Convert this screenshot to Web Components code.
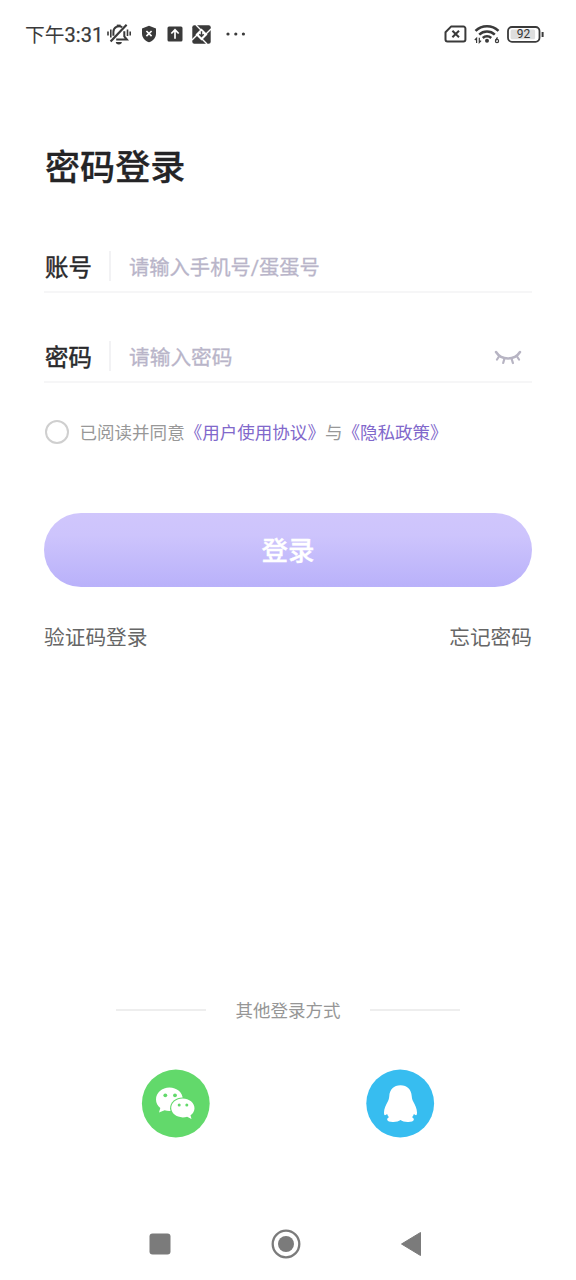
<!DOCTYPE html>
<html lang="zh-CN">
<head>
<meta charset="utf-8">
<title>密码登录</title>
<style>
html,body{margin:0;padding:0;background:#fff}
body{width:576px;height:1280px;overflow:hidden;font-family:Roboto,"Noto Sans CJK SC",sans-serif;color:#29292b}
</style>
</head>
<body>
<login-screen></login-screen>
<script>
const define = (name, html) => {
  const t = document.createElement('template');
  t.innerHTML = html;
  customElements.define(name, class extends HTMLElement {
    constructor() {
      super();
      this.attachShadow({ mode: 'open' }).appendChild(t.content.cloneNode(true));
    }
  });
};

define('status-bar', `
<style>
:host{display:flex;height:68px;box-sizing:border-box;padding:0 32px 0 25px;align-items:center;color:#3a3a3a}
.time{font-size:19.8px;line-height:24px;width:82px;white-space:nowrap;margin-top:3px}
.time b{font-weight:400;font-size:20px;-webkit-text-stroke:.25px}
svg{display:block;flex:none}
.sp{flex:1}
.bat{position:relative;display:flex;width:37px;height:17px}
.bat span{position:absolute;left:0;top:0;width:33px;line-height:17px;text-align:center;font-size:12px;color:#333}
</style>
<div class="time">下午<b>3:31</b></div>
<svg width="24" height="22" viewBox="0 0 24 22" fill="none" stroke="#3a3a3a" stroke-width="2">
<path d="M3.600 18.600 19.600 1.800" stroke-width="2.200"/><path d="M6.400 12.800V9a5.600 5.600 0 0 1 8.800-4.700M17.300 8.200v5.200l2.600 3.200H9.200"/><path d="M9.800 2.600h3.800"/><path d="M8.800 19h6a3 2.400 0 0 1-6 0z" fill="#3a3a3a" stroke="none"/>
<path d="M3.800 6.400v8.200M20.500 6.400v6.500M1 8.600v4M23.200 8.600v4" stroke-width="1.600"/></svg>
<svg style="margin-left:10px" width="16" height="18" viewBox="0 0 16 18"><path d="M8 .8 15 3.400v5c0 4.200-3 7.300-7 8.900-4-1.600-7-4.700-7-8.900v-5z" fill="#3a3a3a"/><path d="m5.400 6 5.200 5.200m0-5.200-5.200 5.200" stroke="#fff" stroke-width="1.700"/></svg>
<svg style="margin-left:10px" width="16" height="16" viewBox="0 0 16 16"><rect x=".5" y=".5" width="15" height="15" rx="1.500" fill="#3a3a3a"/><path d="M8 12.800V4M4.300 7.500 8 3.800l3.700 3.700" fill="none" stroke="#fff" stroke-width="1.700"/></svg>
<svg style="margin-left:9px" width="19" height="19" viewBox="0 0 19 19"><rect x=".3" y=".3" width="18.400" height="18.400" rx="2" fill="#3a3a3a"/><path d="M9.500 3.500 15.500 9.500 9.500 15.500 3.500 9.500z" fill="#fff"/><path d="M4 0 12 8M19 4 11 12M15 19 7 11M0 15 8 7" stroke="#fff" stroke-width="1.400"/><path d="M9.500 6.200v5M7.300 9.300 9.500 11.600l2.200-2.300" fill="none" stroke="#3a3a3a" stroke-width="1.400"/></svg>
<svg style="margin-left:15px" width="20" height="4" viewBox="0 0 20 4" fill="#3a3a3a"><circle cx="2" cy="2" r="1.600"/><circle cx="9.800" cy="2" r="1.600"/><circle cx="17.400" cy="2" r="1.600"/></svg>
<div class="sp"></div>
<svg style="margin-right:7px" width="23" height="18" viewBox="0 0 23 18" fill="none" stroke="#3a3a3a" stroke-width="2"><path d="M7 1.600h12.400a2 2 0 0 1 2 2v10.800a2 2 0 0 1-2 2H3.500a2 2 0 0 1-2-2V7.200z" stroke-linejoin="round"/><path d="m8.400 5.700 6.600 6.600m0-6.600-6.600 6.600"/></svg>
<svg style="margin-right:7px" width="26" height="20" viewBox="0 0 26 20" fill="none" stroke="#3a3a3a" stroke-width="2.500"><path d="M1.500 6.900a16.500 16.500 0 0 1 23 0M5.200 10.600a11.300 11.300 0 0 1 15.600 0M8.800 14a6.100 6.100 0 0 1 8.400 0"/><circle cx="13" cy="16.800" r="2" fill="#3a3a3a" stroke="none"/><path d="M2.600 19v-4.800L.8 16M5.300 13.700v4.800l1.800-1.800" stroke-width="1.200"/><path d="M23.500 13.300 21.700 16.300" stroke-width="1.300"/><circle cx="23" cy="17" r="1.600" stroke-width="1.200"/></svg>
<div class="bat"><svg width="37" height="17" viewBox="0 0 37 17"><rect x="1" y="1" width="31.500" height="14.800" rx="4" fill="#fff" stroke="#3a3a3a" stroke-width="1.800"/><rect x="3.600" y="3.500" width="24.500" height="9.800" rx="1.500" fill="#dedede"/><path d="M35.600 6v5" stroke="#3a3a3a" stroke-width="2"/></svg><span>92</span></div>
`);

define('input-row', `
<style>
:host{display:flex;height:61px;box-sizing:border-box;border-bottom:2px solid #f6f6f7;align-items:center;padding:9px 10px 0 1px}
.label{font-size:23.400px;line-height:30px;width:64px;margin-top:4px;-webkit-text-stroke:.5px #29292b}
.bar{width:2px;height:30px;background:#f2f2f4;margin-right:18px}
.hint{font-size:var(--hint-size,20.700px);line-height:30px;margin-top:3px;color:#b9b5c9;-webkit-text-stroke:.3px #b9b5c9;white-space:nowrap;flex:1}
</style>
<div class="label"><slot name="label"></slot></div><div class="bar"></div><div class="hint"><slot></slot></div><slot name="icon"></slot>
`);

define('closed-eye', `
<style>:host{display:block;height:18px;width:28px;margin-top:1px}svg{display:block}</style>
<svg width="28" height="18" viewBox="0 0 28 18" fill="none" stroke="#b7b4c3" stroke-width="2.200" stroke-linecap="round"><path d="M2 4C7.500 12.600 20.500 12.600 26 4" stroke-width="2.500"/><path d="M5 8.500 3 11.500M10.300 11 9.200 15M17.700 11l1.200 4M23 8.500l2 3"/></svg>
`);

define('agree-line', `
<style>
:host{display:flex;align-items:center;height:26px;padding-left:1px;font-size:17.550px;line-height:26px;color:#989898;white-space:nowrap}
i{width:24px;height:24px;box-sizing:border-box;border:2px solid #cfcfcf;border-radius:50%;margin-right:10.500px}
div{padding-top:2px}
span{color:#8168cb}
</style>
<i></i><div>已阅读并同意<span>《用户使用协议》</span>与<span>《隐私政策》</span></div>
`);

define('primary-button', `
<style>
:host{display:flex;height:74px;box-sizing:border-box;padding-top:2px;border-radius:37px;align-items:center;justify-content:center;background:linear-gradient(#d0c6fc 0%,#cdc4fc 30%,#b9b1fa 100%);color:#fff;font-size:26.500px;line-height:36px;font-weight:500;-webkit-text-stroke:.3px #fff}
</style>
<slot></slot>
`);

define('section-divider', `
<style>
:host{display:flex;align-items:center;justify-content:center;height:26px;gap:29.500px;font-size:17.500px;line-height:26px;color:#969696}
i{width:90px;height:2px;background:#eee}
span{padding-top:2px}
</style>
<i></i><span><slot></slot></span><i></i>
`);

define('social-logins', `
<style>:host{display:flex;justify-content:space-between;padding:0 141px}svg{display:block}</style>
<svg width="69" height="69" viewBox="0 0 69 69"><circle cx="34.800" cy="34.500" r="33.900" fill="#62d96b"/>
<path d="M28.500 18.500c7.300 0 13.300 5 13.300 11.600S36 42 28.500 42c-1.700 0-3.400-.3-4.900-.8L18 43.500l1.300-4.600c-2.700-2-4.300-5.200-4.300-8.500 0-6.700 6-11.900 13.500-11.900z" fill="#fff"/>
<ellipse cx="41.600" cy="39.300" rx="12.500" ry="10.900" fill="#62d96b"/>
<path d="M41.600 29.500c6.600 0 11.900 4.400 11.900 9.700 0 2.900-1.600 5.400-4 7.100l1 3.600-4.400-2.100c-1.300.4-2.800.6-4.300.6-6.500 0-11.600-4.200-11.600-9.300 0-5.300 5-9.600 11.400-9.600z" fill="#fff"/>
<g fill="#62d96b"><circle cx="24.300" cy="26.300" r="1.900"/><circle cx="34" cy="26.300" r="1.900"/><circle cx="38.200" cy="36" r="1.500"/><circle cx="45.800" cy="36" r="1.500"/></g></svg>
<svg width="69" height="69" viewBox="0 0 69 69"><circle cx="34.200" cy="34.500" r="33.900" fill="#37bdf0"/>
<path d="M34.500 16.300c6.700 0 10.900 4.600 11.200 10.600.2 2.200.6 3.600 1.500 5.700 2 3.900 3.800 7.400 3.800 11 0 1.500-.3 2.700-1 2.700-.7 0-1.400-.5-2.100-1.200-.4 1.300-1 2.200-1.900 3.200 1.600.7 1.900 1.500 1.800 2.500-.3 1.800-3 2.300-6.200 2.200-2.900-.1-5.600-.8-7.100-2-1.500 1.200-4.200 1.900-7.100 2-3.200.1-5.900-.4-6.200-2.200-.1-1 .2-1.800 1.800-2.500-.9-1-1.500-1.900-1.900-3.200-.7.700-1.400 1.200-2.100 1.200-.7 0-1-1.200-1-2.700 0-3.600 1.800-7.100 3.800-11 .9-2.100 1.300-3.500 1.500-5.700.3-6 4.500-10.600 11.200-10.600z" fill="#fff"/></svg>
`);

define('nav-bar', `
<style>:host{display:flex;align-items:center;justify-content:space-between;height:30px;padding:0 154px 0 149px}svg{display:block}</style>
<svg width="22" height="22" viewBox="0 0 22 22"><rect x=".5" y=".5" width="21" height="21" rx="3" fill="#7b7b7b"/></svg>
<svg width="30" height="30" viewBox="0 0 30 30"><circle cx="15" cy="15" r="13.300" fill="none" stroke="#7b7b7b" stroke-width="2.300"/><circle cx="15" cy="15" r="8" fill="#7b7b7b"/></svg>
<svg width="22" height="26" viewBox="0 0 22 26"><path d="M20.500 1.500v23L1.500 13z" fill="#7b7b7b" stroke="#7b7b7b" stroke-linejoin="round"/></svg>
`);

define('login-screen', `
<style>
:host{display:flex;flex-direction:column;width:576px;height:1280px;background:#fff}
.form{display:flex;flex-direction:column;padding:0 44px}
h1{margin:77px 0 0 1px;font-size:35.100px;line-height:46px;font-weight:500;color:#242426;-webkit-text-stroke:.3px #242426}
.a{margin-top:41px;--hint-size:20.300px}.b{margin-top:29px}
agree-line{margin-top:36px}
primary-button{margin-top:68px}
.links{display:flex;justify-content:space-between;margin-top:36px;font-size:20.700px;line-height:30px;color:#666}
section-divider{margin-top:344px}
social-logins{margin-top:45.500px}
nav-bar{margin-top:91px}
</style>
<status-bar></status-bar>
<div class="form">
<h1>密码登录</h1>
<input-row class="a"><span slot="label">账号</span>请输入手机号/蛋蛋号</input-row>
<input-row class="b"><span slot="label">密码</span>请输入密码<closed-eye slot="icon"></closed-eye></input-row>
<agree-line></agree-line>
<primary-button>登录</primary-button>
<div class="links"><span>验证码登录</span><span>忘记密码</span></div>
</div>
<section-divider>其他登录方式</section-divider>
<social-logins></social-logins>
<nav-bar></nav-bar>
`);
</script>
</body>
</html>
